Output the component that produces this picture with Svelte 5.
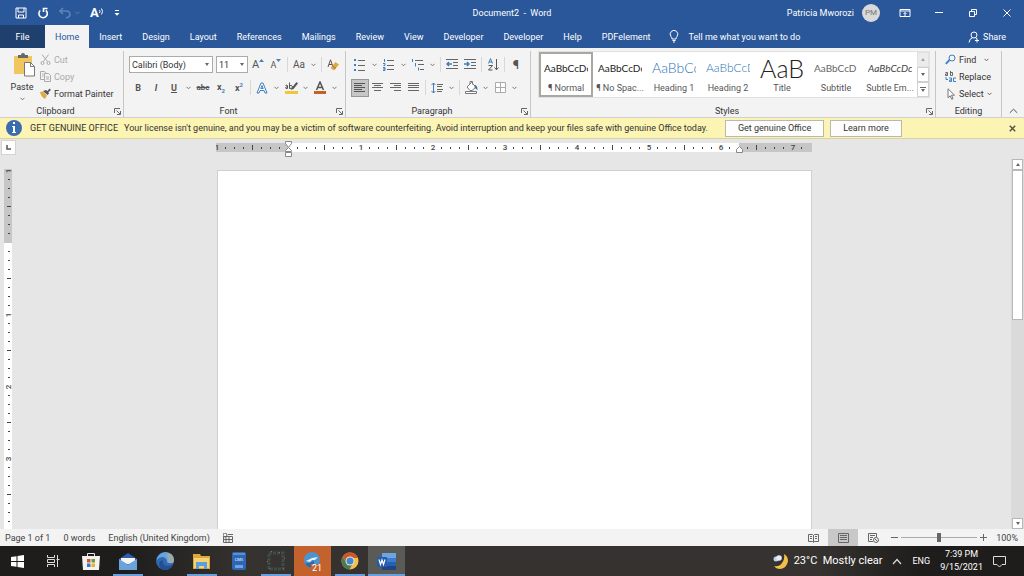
<script lang="ts">
	const tabs = [
		'File',
		'Home',
		'Insert',
		'Design',
		'Layout',
		'References',
		'Mailings',
		'Review',
		'View',
		'Developer',
		'Developer',
		'Help',
		'PDFelement'
	];

	const styles = [
		{ name: '¶ Normal', sample: 'AaBbCcDc', kind: 'normal' },
		{ name: '¶ No Spac...', sample: 'AaBbCcDc', kind: 'normal' },
		{ name: 'Heading 1', sample: 'AaBbCc', kind: 'heading1' },
		{ name: 'Heading 2', sample: 'AaBbCcD', kind: 'heading2' },
		{ name: 'Title', sample: 'AaB', kind: 'title' },
		{ name: 'Subtitle', sample: 'AaBbCcD', kind: 'subtitle' },
		{ name: 'Subtle Em...', sample: 'AaBbCcDc', kind: 'emphasis' }
	];

	// 72px per inch, one tick every 1/8 inch
	const tickStep = 9;
	const hTicks = Array.from({ length: 66 }, (_, i) => i - 8);

	let rulerHeight = $state(370);
	const vTicks = $derived(
		Array.from({ length: Math.max(0, Math.floor((rulerHeight - 84) / tickStep) + 9) }, (_, i) => i - 8)
	);

	let activeTab = $state(1);
	let activeStyle = $state(0);
	let zoom = $state(50);
	let showMessage = $state(true);
</script>

{#snippet chevron()}
	<svg class="chevron" width="5" height="4" viewBox="0 0 5 4"><path d="M.5 .8 2.5 2.8 4.5 .8" /></svg>
{/snippet}

{#snippet drop(label: string)}
	<button class="drop" aria-label={label}>{@render chevron()}</button>
{/snippet}

{#snippet launcher(label: string)}
	<button class="launcher" aria-label={label}>
		<svg width="7" height="7" viewBox="0 0 7 7"><path d="M.5 5V.5H6M2.5 2.5l3.5 3.5M6.5 3v3.500H3" /></svg>
	</button>
{/snippet}

<div class="window">
	<header class="titlebar">
		<div class="quick">
			<button aria-label="Save">
				<svg width="12" height="12" viewBox="0 0 12 12"><path d="M1 1h10v10H1zM3 1v4h6V1M3.500 11V8h5v3" /></svg>
			</button>
			<button aria-label="Repeat">
				<svg width="12" height="12" viewBox="0 0 12 12"><path class="thick" d="M3.200 3.500A4.200 4.200 0 1 0 8.800 3.300M6.500 5V1.500H10.500" /></svg>
			</button>
			<button class="faded" aria-label="Undo">
				<svg width="12" height="12" viewBox="0 0 12 12"><path class="thick" d="M1 4h6q4 0 4 3.500Q11 10 7 11M4 1 1 4l3 3" /></svg>
			</button>
			<span class="faded">{@render chevron()}</span>
			<button class="read" aria-label="Read aloud">
				<b>A</b>
				<svg width="5" height="10" viewBox="0 0 5 10"><path d="M.5 2q1 1.500 0 3M2.500 .5q2 3 0 6" /></svg>
			</button>
			<button aria-label="Customise toolbar">
				<svg width="6" height="8" viewBox="0 0 6 8"><path d="M1 1.500h4" /><path class="solid" d="M.5 4h5L3 6.800z" /></svg>
			</button>
		</div>
		<h1>Document2&nbsp; -&nbsp; Word</h1>
		<div class="account">
			<span>Patricia Mworozi</span>
			<span class="avatar">PM</span>
			<button aria-label="Ribbon display options">
				<svg width="12" height="10" viewBox="0 0 12 10"><path d="M1 1.500h10v7H1zM1 3h10M6 8V4.500M4.500 6 6 4.500 7.500 6" /></svg>
			</button>
			<button aria-label="Minimise">
				<svg width="10" height="10" viewBox="0 0 10 10"><path d="M1 4.500h8" /></svg>
			</button>
			<button aria-label="Restore">
				<svg width="10" height="10" viewBox="0 0 10 10"><path d="M1.500 3.500h5v5h-5zM3.500 3V1.500h5v5H7" /></svg>
			</button>
			<button aria-label="Close">
				<svg width="10" height="10" viewBox="0 0 10 10"><path d="M1.500 1.500l7 7M8.500 1.500l-7 7" /></svg>
			</button>
		</div>
	</header>

	<nav class="tabs">
		{#each tabs as tab, i}
			<button class="tab" class:file={i === 0} class:active={i === activeTab} onclick={() => (activeTab = i)}>{tab}</button>
		{/each}
		<button class="tell">
			<svg width="10" height="13" viewBox="0 0 10 13"><path d="M3 9Q3 7.500 2 6.500A3.800 3.800 0 1 1 8 6.500Q7 7.500 7 9zM3.500 10.500h3M4 12h2" /></svg>
			Tell me what you want to do
		</button>
		<button class="share">
			<svg width="12" height="12" viewBox="0 0 12 12"><circle cx="6" cy="4" r="3" /><path d="M1 11.500Q1.500 7.500 4.500 6.800M7.500 6.800l1.500 1.200M9 7.500v4M7 9.500h4" /></svg>
			Share
		</button>
	</nav>

	<section class="ribbon">
		<div class="group clipboard">
			<div class="body">
				<button class="paste">
					<svg width="22" height="24" viewBox="0 0 22 24">
						<path fill="#efc75e" d="M1 3h18v18H1z" />
						<path fill="#686868" d="M5 5V2h3q0-2 2-2t2 2h3v3z" />
						<path fill="#fff" stroke="#777" d="M11.500 9.500h6l4 4v9.500h-10z" />
						<path fill="none" stroke="#777" d="M17.500 9.500v4h4" />
					</svg>
					Paste
					{@render chevron()}
				</button>
				<div class="stack">
					<button class="disabled" disabled>
						<svg width="11" height="11" viewBox="0 0 11 11"><path d="M2 .5l5.500 7M8.500 .5 3.500 7.500" /><circle cx="2.500" cy="9" r="1.500" /><circle cx="8.500" cy="9" r="1.500" /></svg>
						Cut
					</button>
					<button class="disabled" disabled>
						<svg width="11" height="11" viewBox="0 0 11 11"><path d="M4 8.500H.5v-8h4l1.500 2M2 3h1.500M2 5h1.500M4.500 2.500h4l2 2v6h-6zM6 6h3M6 8h3" /></svg>
						Copy
					</button>
					<button>
						<svg width="11" height="11" viewBox="0 0 11 11"><path fill="#e8b84a" d="M0 4l3-.5 4 4L5 11Q1 9 0 4z" /><path fill="#555" d="M3 3l3-1 1.500 1L9.500 .5 11 2 8.500 4 9 5.500 7.500 7z" /></svg>
						Format Painter
					</button>
				</div>
			</div>
			<footer><span>Clipboard</span>{@render launcher('Clipboard settings')}</footer>
		</div>

		<div class="group font">
			<div class="body rows">
				<div class="row">
					<span class="select name">
						<select aria-label="Font"><option>Calibri (Body)</option></select>
						<i></i>
					</span>
					<span class="select size">
						<select aria-label="Font size"><option>11</option></select>
						<i></i>
					</span>
					<button class="tool grow">A<svg width="5" height="4" viewBox="0 0 5 4"><path fill="#4a80b8" d="M0 3h5L2.500 0z" /></svg></button>
					<button class="tool shrink">A<svg width="5" height="4" viewBox="0 0 5 4"><path fill="#4a80b8" d="M0 0h5L2.500 3z" /></svg></button>
					<span class="rule"></span>
					<button class="tool case">Aa</button>
					{@render drop('Change case')}
					<span class="rule"></span>
					<button class="tool" aria-label="Clear formatting">
						<svg width="12" height="12" viewBox="0 0 12 12"><path stroke="#555" fill="none" d="M1 8 3.500 .8 6 8M2 5.500h3" /><path fill="#e3a83b" d="M3.500 9 8.500 3l3.500 2.500-5 6z" /><path stroke="#777" fill="none" d="M5.500 7l3.500 2.500" /></svg>
					</button>
				</div>
				<div class="row">
					<button class="tool"><b>B</b></button>
					<button class="tool"><b><em>I</em></b></button>
					<button class="tool"><b><u>U</u></b></button>
					{@render drop('Underline style')}
					<button class="tool strike">abc</button>
					<button class="tool"><b>x<sub>2</sub></b></button>
					<button class="tool"><b>x<sup>2</sup></b></button>
					<span class="rule"></span>
					<button class="tool" aria-label="Text effects">
						<svg width="12" height="12" viewBox="0 0 12 12"><path fill="#fff" stroke="#3f7fbf" d="M1 11 5 1h2l4 10H9L8 8.500H4L3 11zM4.800 6.500h2.400L6 3.500z" /></svg>
					</button>
					{@render drop('Text effects menu')}
					<button class="tool" aria-label="Highlight">
						<svg width="13" height="13" viewBox="0 0 13 13"><path fill="#f0c63c" d="M0 10h13v3H0z" /><path stroke="#555" fill="none" d="M.5 4.500q2-1 2 0v3q-2 .5-2-.7 0-1 2-1M4.500 1.500v6q3 .5 3-1.500T4.500 4.500" /><path fill="#555" d="M6 9l1-2.500L11.500 1 13 2.500 8.500 8z" /></svg>
					</button>
					{@render drop('Highlight colour')}
					<button class="tool" aria-label="Font colour">
						<svg width="12" height="13" viewBox="0 0 12 13"><path fill="#c4602b" d="M0 10h12v3H0z" /><path stroke="#555" stroke-width="1.500" fill="none" d="M2.500 9 6 1l3.500 8M3.800 6.500h4.400" /></svg>
					</button>
					{@render drop('Font colour menu')}
				</div>
			</div>
			<footer><span>Font</span>{@render launcher('Font settings')}</footer>
		</div>

		<div class="group paragraph">
			<div class="body rows">
				<div class="row">
					<button class="tool" aria-label="Bullets">
						<svg width="12" height="12" viewBox="0 0 12 12"><path fill="#3f7fbf" d="M0 0h2v2H0zM0 5h2v2H0zM0 10h2v2H0z" /><path stroke="#666" d="M4 1.500h7M4 6.500h7M4 11.500h7" /></svg>
					</button>
					{@render drop('Bullet library')}
					<button class="tool" aria-label="Numbering">
						<svg width="12" height="12" viewBox="0 0 12 12"><path stroke="#3f7fbf" fill="none" d="M1.500 0v3M0 4.500h2v2H.5M0 8.500h2v3H0M0 10h2" /><path stroke="#666" d="M4 1.500h7M4 6.500h7M4 10.500h7" /></svg>
					</button>
					{@render drop('Numbering library')}
					<button class="tool" aria-label="Multilevel list">
						<svg width="12" height="12" viewBox="0 0 12 12"><path stroke="#3f7fbf" fill="none" d="M.5 0v3M3.500 4v3.500M6.500 8.500v3" /><path stroke="#666" d="M3 1.500h8M6 5.500h6M8 10.500h4" /></svg>
					</button>
					{@render drop('List library')}
					<span class="rule"></span>
					<button class="tool" aria-label="Decrease indent">
						<svg width="12" height="11" viewBox="0 0 12 11"><path stroke="#666" d="M0 .5h12M7 3.500h5M7 6.500h5M0 9.500h12" /><path fill="none" stroke="#3f7fbf" stroke-width="1.500" d="M6 5H1M3 3 1 5l2 2" /></svg>
					</button>
					<button class="tool" aria-label="Increase indent">
						<svg width="12" height="11" viewBox="0 0 12 11"><path stroke="#666" d="M0 .5h12M7 3.500h5M7 6.500h5M0 9.500h12" /><path fill="none" stroke="#3f7fbf" stroke-width="1.500" d="M0 5h5M3 3l2 2-2 2" /></svg>
					</button>
					<span class="rule"></span>
					<button class="tool" aria-label="Sort">
						<svg width="11" height="13" viewBox="0 0 11 13"><path fill="none" stroke="#3f7fbf" d="M.5 5.500 2.500 .5l2 5M1 4h3" /><path fill="none" stroke="#555" d="M.5 7.500h4l-4 4.500h4M8.500 1v10.500M6.500 9.500l2 2.300 2-2.300" /></svg>
					</button>
					<span class="rule"></span>
					<button class="tool pilcrow">¶</button>
				</div>
				<div class="row">
					<button class="tool pressed" aria-label="Align left">
						<svg width="12" height="11" viewBox="0 0 12 11"><path stroke="#555" d="M0 1.500h11M0 3.500h8M0 5.500h11M0 7.500h8M0 9.500h11" /></svg>
					</button>
					<button class="tool" aria-label="Centre">
						<svg width="12" height="11" viewBox="0 0 12 11"><path stroke="#666" d="M0 1.500h11M2 3.500h7M0 5.500h11M2 8.500h7" /></svg>
					</button>
					<button class="tool" aria-label="Align right">
						<svg width="12" height="11" viewBox="0 0 12 11"><path stroke="#666" d="M0 1.500h11M4 3.500h7M0 5.500h11M4 8.500h7" /></svg>
					</button>
					<button class="tool" aria-label="Justify">
						<svg width="12" height="11" viewBox="0 0 12 11"><path stroke="#666" d="M0 1.500h11M0 3.500h11M0 5.500h11M0 8.500h11" /></svg>
					</button>
					<span class="rule"></span>
					<button class="tool" aria-label="Line spacing">
						<svg width="12" height="12" viewBox="0 0 12 12"><path fill="none" stroke="#3f7fbf" d="M2.500 1v10M.5 3l2-2 2 2M.5 9l2 2 2-2" /><path stroke="#666" d="M6 2.500h6M6 4.500h5M6 7.500h6M6 9.500h5" /></svg>
					</button>
					{@render drop('Line spacing options')}
					<span class="rule"></span>
					<button class="tool" aria-label="Shading">
						<svg width="13" height="13" viewBox="0 0 13 13"><path fill="#fff" stroke="#777" d="M2 6l4.500-4.500L11 6l-4 3.500H5zM5 3V.5h2.500v3M.5 10.500h11v2H.5z" /><path fill="#3f6fa5" d="M9.500 4q3 0 3 5-2-1-3-3z" /></svg>
					</button>
					{@render drop('Shading colour')}
					<button class="tool" aria-label="Borders">
						<svg width="11" height="11" viewBox="0 0 11 11"><path fill="#fff" stroke="#aaa" d="M.5 .5h10v10H.5zM5.500 0v11M0 5.500h11" /></svg>
					</button>
					{@render drop('Border options')}
				</div>
			</div>
			<footer><span>Paragraph</span>{@render launcher('Paragraph settings')}</footer>
		</div>

		<div class="group styles">
			<div class="body">
				<div class="gallery">
					{#each styles as style, i}
						<button class="style" class:selected={i === activeStyle} onclick={() => (activeStyle = i)}>
							<span class="sample {style.kind}">{style.sample}</span>
							<span class="caption">{style.name}</span>
						</button>
					{/each}
					<div class="scroller">
						<button aria-label="Previous styles" disabled><i class="tri up"></i></button>
						<button aria-label="Next styles"><i class="tri"></i></button>
						<button aria-label="More styles"><i class="bar"></i><i class="tri"></i></button>
					</div>
				</div>
			</div>
			<footer><span>Styles</span>{@render launcher('Styles pane')}</footer>
		</div>

		<div class="group editing">
			<div class="body">
				<div class="stack">
					<button>
						<svg width="11" height="11" viewBox="0 0 11 11"><circle cx="7" cy="4" r="3" stroke="#3f7fbf" /><path stroke="#3f7fbf" stroke-width="1.800" d="M4.500 6 .8 9.800" /></svg>
						Find
						<span class="after">{@render chevron()}</span>
					</button>
					<button>
						<svg width="11" height="11" viewBox="0 0 11 11"><path stroke="#555" d="M.5 1.500h2v3h-2v-1.500h2M5.500 0v4.500h2v-3h-2" /><path stroke="#3f7fbf" d="M1 6v2.500h2M4 7h2.500v3.500H4.500V9h2M11 7H8.500v3.500H11" /></svg>
						Replace
					</button>
					<button>
						<svg width="11" height="12" viewBox="0 0 11 12"><path fill="#fff" stroke="#777" d="M3 .8v9l2.200-2 1.500 3.500 1.300-.6L6.500 7.200H9.500z" /></svg>
						Select
						{@render chevron()}
					</button>
				</div>
			</div>
			<footer><span>Editing</span></footer>
		</div>
		<button class="collapse" aria-label="Collapse the ribbon">
			<svg width="9" height="6" viewBox="0 0 9 6"><path d="M.8 4.800 4.500 1.200 8.200 4.800" /></svg>
		</button>
	</section>

	{#if showMessage}
		<aside class="message">
			<svg width="18" height="18" viewBox="0 0 18 18"><circle cx="9" cy="9" r="8" fill="#3c6cb0" /><path fill="#fff" d="M8 3h2v2H8zM7 7h3v6h1v1H7v-1h1V8H7z" /></svg>
			<strong>GET GENUINE OFFICE</strong>
			<p>Your license isn't genuine, and you may be a victim of software counterfeiting. Avoid interruption and keep your files safe with genuine Office today.</p>
			<button class="action">Get genuine Office</button>
			<button class="action">Learn more</button>
			<button class="dismiss" aria-label="Dismiss" onclick={() => (showMessage = false)}>
				<svg width="7" height="7" viewBox="0 0 7 7"><path d="M.8 .8l5.400 5.400M6.200 .8.8 6.200" /></svg>
			</button>
		</aside>
	{/if}

	<main class="workspace">
		<button class="tabstop" aria-label="Tab stop">
			<svg width="5" height="5" viewBox="0 0 5 5"><path d="M1 0v4h4" /></svg>
		</button>
		<div class="hruler">
			<svg width="596" height="20" viewBox="0 0 596 20">
				<path fill="#c6c6c6" d="M0 4h596v9H0z" />
				<path fill="#fff" d="M73 4h450v9H73z" />
				{#each hTicks as n}
					{#if n % 8 === 0}
						{#if n !== 0}
							<text x={73 + n * tickStep} y="11">{Math.abs(n / 8)}</text>
						{/if}
					{:else if n % 4 === 0}
						<rect x={72 + n * tickStep} y="6" width="1" height="5" />
					{:else}
						<rect x={72 + n * tickStep} y="8" width="1" height="2" />
					{/if}
				{/each}
				<path class="marker" d="M69.500 2.500h6v2l-3 4-3-4zM72.500 8.500l3 3v1h-6v-1zM69.500 13.500h6v4h-6z" />
				<path class="marker" d="M523.500 7.500l3 3v3h-6v-3z" />
			</svg>
		</div>
		<div class="vruler" bind:clientHeight={rulerHeight}>
			<svg width="8" height={rulerHeight - 10}>
				<rect class="paper" width="8" height="100%" />
				<path fill="#c6c6c6" d="M0 0h8v74H0z" />
				{#each vTicks as n}
					{#if n % 8 === 0}
						{#if n !== 0}
							<text transform="translate(7 {74 + n * tickStep}) rotate(-90)">{Math.abs(n / 8)}</text>
						{/if}
					{:else if n % 4 === 0}
						<rect x="3" y={73 + n * tickStep} width="4" height="1" />
					{:else}
						<rect x="4" y={73 + n * tickStep} width="2" height="1" />
					{/if}
				{/each}
			</svg>
		</div>
		<div class="canvas">
			<div class="page" contenteditable="true" role="textbox" aria-label="Document" tabindex="0"></div>
		</div>
		<div class="scrollbar">
			<button aria-label="Scroll up"><i class="tri up"></i></button>
			<div class="track"><span class="thumb"></span></div>
			<button aria-label="Scroll down"><i class="tri"></i></button>
		</div>
	</main>

	<div class="status">
		<span>Page 1 of 1</span>
		<span>0 words</span>
		<span>English (United Kingdom)</span>
		<svg width="10" height="10" viewBox="0 0 10 10"><path fill="none" stroke="#666" d="M.5 3.500h9v6h-9zM3 3.500v6M6 3.500v6M1 6.500h8M5 1.500h5" /><circle cx="2" cy="2" r="2" fill="#555" /></svg>
		<div class="views">
			<button aria-label="Read mode">
				<svg width="11" height="10" viewBox="0 0 11 10"><path d="M.5 1.500h4l1 1 1-1h4v7h-4l-1 1-1-1h-4zM5.500 2v7M2 3.500h2M2 5.500h2M7 3.500h2M7 5.500h2" /></svg>
			</button>
			<button class="current" aria-label="Print layout">
				<svg width="11" height="10" viewBox="0 0 11 10"><path d="M.5 .5h10v9H.5zM2 2.500h7M2 4.500h7M2 6.500h7" /></svg>
			</button>
			<button aria-label="Web layout">
				<svg width="11" height="10" viewBox="0 0 11 10"><path d="M5 8.500H.5v-8h8V4M2 2.500h5M2 4.500h3M2 6.500h2" /><circle cx="8" cy="7" r="2.500" /><path d="M6.500 5.500l3 3" /></svg>
			</button>
		</div>
		<div class="zoom">
			<button aria-label="Zoom out"><svg width="7" height="7" viewBox="0 0 7 7"><path d="M0 3.500h7" /></svg></button>
			<input type="range" aria-label="Zoom" min="0" max="100" bind:value={zoom} />
			<button aria-label="Zoom in"><svg width="7" height="7" viewBox="0 0 7 7"><path d="M0 3.500h7M3.500 0v7" /></svg></button>
			<span>100%</span>
		</div>
	</div>

	<div class="taskbar">
		<button class="app start" aria-label="Start">
			<svg width="13" height="13" viewBox="0 0 13 13"><path fill="#fff" d="M0 2l5.500-.8V6H0zM6.500 1 13 0v6H6.500zM0 7h5.500v4.800L0 11zM6.500 7H13v6l-6.500-1z" /></svg>
		</button>
		<button class="app" aria-label="Task view">
			<svg width="13" height="12" viewBox="0 0 13 12"><path fill="none" stroke="#ddd" d="M.5 0v2.500h7V0M.5 4.500h7v3h-7zM.5 12V9.500h7V12M10.500 0v12M9.500 4.500h3" /></svg>
		</button>
		<button class="app" aria-label="Store">
			<svg width="18" height="18" viewBox="0 0 18 18"><path fill="none" stroke="#e8e8e8" d="M5.500 4V1.500h7V4" /><path fill="#f2f2f2" d="M0 4h18l-1 14H1z" /><path fill="#d9532c" d="M5 7h3.500v3.500H5z" /><path fill="#6d9c3c" d="M9.500 7H13v3.500H9.500z" /><path fill="#3079c4" d="M5 11.500h3.500V15H5z" /><path fill="#e9b233" d="M9.500 11.500H13V15H9.500z" /></svg>
		</button>
		<button class="app open" aria-label="Mail">
			<svg width="18" height="17" viewBox="0 0 18 17"><path fill="#2c5fa6" d="M0 6 9 0l9 6v3H0z" /><path fill="#f5f5f5" d="M2 5h14v6H2z" /><path fill="#6aa2dc" d="M0 6l9 5.500L18 6v11H0z" /></svg>
		</button>
		<button class="app" aria-label="Edge">
			<svg width="18" height="18" viewBox="0 0 18 18"><circle cx="9" cy="9" r="9" fill="#2f69b2" /><path fill="#69a5dc" d="M1 6Q4 0 10 0q8 1 8 8 0 3-4 3-4 0-3-2Q10 5 6 5 3 5 1 8z" /><path fill="#a1a8a8" d="M12 1q6 2 6 8-1 3-4 2-2 0-2-1 1-4-1-6z" /><path fill="#234f94" d="M7 8q-1 6 5 6 3 0 5-2-3 6-8 6-6-1-6-6 0-3 4-4z" /></svg>
		</button>
		<button class="app open" aria-label="File Explorer">
			<svg width="17" height="15" viewBox="0 0 17 15"><path fill="#dca936" d="M0 0h7l1 2h9v13H0z" /><path fill="#f6d277" d="M1 4h15v10H1z" /><path fill="#5c9fda" d="M3 8h11v7h-3v-3H6v3H3z" /></svg>
		</button>
		<button class="app" aria-label="CMS">
			<svg width="14" height="18" viewBox="0 0 14 18"><rect width="14" height="18" rx="2" fill="#2c66b5" /><rect x="1" y="1" width="12" height="2" fill="#5b91d0" /><rect x="3" y="13" width="8" height="3" fill="#6fa5dc" /><text x="7" y="9">CMS</text></svg>
		</button>
		<button class="app open" aria-label="Capture tool">
			<svg width="18" height="20" viewBox="0 0 18 20"><path fill="none" stroke="#3c4c4b" stroke-width="3" stroke-dasharray="3 1" d="M2 2h14v16H2z" /><path fill="#b36437" d="M4 0h1v1H4zM12 1h1v1h-1zM17 7h1v1h-1zM16 17h1v1h-1zM2 17h1v1H2zM0 10h1v1H0z" /></svg>
		</button>
		<button class="app alert" aria-label="Telegram">
			<svg width="18" height="18" viewBox="0 0 18 18"><circle cx="8" cy="8" r="8" fill="#4d94cf" /><path fill="#e8f0f5" d="M2 9l6-3 6-1-3 3-3 0-2 2z" /><path fill="#2f69a8" d="M1 11q4 1 6-1l3-1v6q-6 2-9-4z" /></svg>
			<span class="badge">21</span>
		</button>
		<button class="app open" aria-label="Chrome">
			<svg width="18" height="18" viewBox="0 0 18 18"><circle cx="9" cy="9" r="8.500" fill="#f0c34a" /><path fill="#c9582c" d="M1.500 5A8.500 8.500 0 0 1 17 6H9L6 11z" /><path fill="#4d7a55" d="M1.500 5A8.500 8.500 0 0 0 8.500 17.500L12 11H6z" /><circle cx="9" cy="9" r="4.500" fill="#e8e8e0" /><circle cx="9" cy="9" r="3.500" fill="#4787ca" /></svg>
		</button>
		<button class="app open focused" aria-label="Word">
			<svg width="19" height="17" viewBox="0 0 19 17"><path fill="#6ca6e2" d="M5 0h14v5H5z" /><path fill="#3b7dcc" d="M5 5h14v4H5z" /><path fill="#2860ae" d="M5 9h14v4H5z" /><path fill="#1d4487" d="M5 13h14v4H5z" /><path fill="#245caf" d="M0 4h10v10H0z" /><path fill="none" stroke="#fff" stroke-width="1.200" d="M2 6.500l1.500 5L5 7l1.500 4.500L8 6.500" /></svg>
		</button>
		<div class="tray">
			<svg width="15" height="15" viewBox="0 0 15 15"><path fill="#f0c04a" d="M11 0q4 2 4 7-1 7-8 8-4 0-6-3 5 1 8-3 3-4 2-9z" /><circle cx="3" cy="5" r="2.500" fill="#b9d3ee" /><circle cx="6" cy="4" r="2.800" fill="#e4edf6" /></svg>
			<span class="weather">23°C&nbsp; Mostly clear</span>
			<svg width="10" height="7" viewBox="0 0 10 7"><path fill="none" stroke="#ddd" stroke-width="1.200" d="M1 6l4-4.500L9 6" /></svg>
			<span>ENG</span>
			<time><span>7:39 PM</span><span>9/15/2021</span></time>
			<svg width="13" height="13" viewBox="0 0 13 13"><path fill="none" stroke="#ddd" d="M.5 1.500h12v8H9l-2.500 2.500L4 9.500H.5z" /></svg>
		</div>
	</div>
</div>

<style>
	:global(body) {
		margin: 0;
	}

	.window {
		display: flex;
		flex-direction: column;
		height: 100vh;
		overflow: hidden;
		font-family: Roboto, 'Open Sans', sans-serif;
		font-size: 9px;
		line-height: 12px;
		color: #333;
		background: #e6e6e6;
	}

	button {
		display: flex;
		align-items: center;
		justify-content: center;
		padding: 0;
		border: 0;
		background: none;
		font: inherit;
		color: inherit;
		white-space: nowrap;
	}

	svg {
		flex: none;
	}

	.chevron path {
		fill: none;
		stroke: #777;
	}

	/* title bar */
	.titlebar {
		display: grid;
		grid-template-columns: 1fr auto 1fr;
		align-items: center;
		height: 25px;
		color: #fff;
		background: #2a579a;
	}

	.titlebar path,
	.tabs path,
	.tabs circle {
		fill: none;
		stroke: #fff;
	}

	.titlebar .thick {
		stroke-width: 1.600;
	}

	.titlebar .solid {
		fill: #fff;
		stroke: none;
	}

	.quick {
		display: flex;
		align-items: center;
		gap: 10px;
		padding-left: 15px;
	}

	.faded {
		display: flex;
		opacity: 0.25;
	}

	.quick span.faded {
		margin-left: -6px;
	}

	.read b {
		font-size: 13px;
	}

	h1 {
		margin: 0;
		font-size: 9px;
		font-weight: 400;
	}

	.account {
		display: flex;
		align-items: center;
		justify-content: flex-end;
	}

	.account button {
		width: 34px;
		height: 24px;
	}

	.avatar {
		width: 18px;
		height: 18px;
		margin: 0 8px;
		border-radius: 50%;
		background: #d9d9d9;
		color: #777;
		font-size: 8px;
		line-height: 18px;
		text-align: center;
	}

	/* tabs */
	.tabs {
		display: flex;
		height: 23px;
		color: #fff;
		background: #2a579a;
	}

	.tab {
		padding: 0 10px;
	}

	.tab.file {
		width: 45px;
		background: #1f3f6e;
	}

	.tab.active {
		background: #f3f3f3;
		color: #2a579a;
	}

	.tell {
		gap: 10px;
		margin-left: 8px;
	}

	.share {
		gap: 3px;
		margin: 0 18px 0 auto;
	}

	/* ribbon */
	.ribbon {
		display: flex;
		height: 69px;
		border-bottom: 1px solid #d2d0ce;
		background: #f3f3f3;
	}

	.group {
		display: flex;
		flex-direction: column;
		box-sizing: border-box;
		margin-top: 3px;
		border-right: 1px solid #c8c6c4;
	}

	.body {
		display: flex;
		flex: none;
		height: 54px;
	}

	.group footer {
		display: flex;
		align-items: center;
		height: 12px;
	}

	.group footer span {
		flex: 1;
		text-align: center;
	}

	.launcher {
		width: 12px;
	}

	.launcher path,
	.stack path,
	.stack circle {
		fill: none;
		stroke: #666;
	}

	.clipboard {
		width: 124px;
	}

	.font {
		width: 222px;
	}

	.paragraph {
		width: 185px;
	}

	.styles {
		flex: 1;
	}

	.editing {
		width: 66px;
	}

	.paste {
		flex-direction: column;
		justify-content: flex-start;
		gap: 4px;
		width: 36px;
		margin-left: 4px;
		padding-top: 2px;
	}

	.paste svg:first-child {
		margin-left: 4px;
	}

	.stack {
		display: flex;
		flex-direction: column;
	}

	.stack button {
		justify-content: flex-start;
		gap: 3px;
		height: 17px;
	}

	.stack path[fill] {
		fill: #e0aa3e;
		stroke: none;
	}

	.stack path[fill='#555'] {
		fill: #555;
	}

	.stack path[stroke='#3f7fbf'],
	.stack circle[stroke] {
		stroke: #3f7fbf;
	}

	.stack path[stroke='#777'] {
		fill: #fff;
		stroke: #777;
	}

	.stack .disabled {
		color: #aaa;
	}

	.stack .disabled path,
	.stack .disabled circle {
		stroke: #aaa;
	}

	.rows {
		flex-direction: column;
		gap: 6px;
		padding: 5px 0 0 5px;
		box-sizing: border-box;
	}

	.row {
		display: flex;
		align-items: center;
		height: 17px;
	}

	.tool {
		width: 18px;
		height: 18px;
		color: #555;
	}

	.tool.pressed {
		background: #c6c6c6;
		box-shadow: inset 0 0 0 1px #979797;
	}

	.tool sub,
	.tool sup {
		font-size: 6px;
		line-height: 6px;
		color: #3f7fbf;
	}

	.grow,
	.shrink {
		align-items: flex-start;
		font-size: 11px;
		line-height: 18px;
	}

	.shrink {
		font-size: 9px;
	}

	.grow svg,
	.shrink svg {
		margin-top: 3px;
	}

	.case {
		font-size: 10px;
	}

	.strike {
		font-size: 8px;
		font-weight: 700;
		text-decoration: line-through;
	}

	.pilcrow {
		font-size: 13px;
	}

	.drop {
		width: 11px;
		height: 18px;
	}

	.rule {
		width: 1px;
		height: 15px;
		margin: 0 2px;
		background: #d8d8d8;
	}

	.select {
		display: grid;
		align-items: center;
		margin-right: 3px;
	}

	.select select,
	.select i {
		grid-area: 1 / 1;
	}

	.select select {
		width: 100%;
		height: 17px;
		padding: 0 2px;
		border: 1px solid #ababab;
		border-radius: 0;
		appearance: none;
		background: #fff;
		color: #333;
		font: inherit;
	}

	.select i,
	.tri {
		width: 0;
		height: 0;
		border: 2px solid transparent;
		border-top: 3px solid #666;
		border-bottom: 0;
	}

	.select i {
		justify-self: end;
		margin-right: 4px;
		pointer-events: none;
	}

	.tri.up {
		border-top: 0;
		border-bottom: 3px solid #666;
	}

	.select.name {
		width: 84px;
	}

	.select.size {
		width: 32px;
		margin-right: 1px;
	}

	.gallery {
		display: flex;
		flex: 1;
		height: 45px;
		margin: 1px 6px 0 8px;
		background: #fff;
		box-shadow: 0 0 0 1px #e1e1e1;
	}

	.style {
		flex: 1;
		flex-direction: column;
		width: 54px;
		min-width: 0;
		justify-content: flex-end;
		padding: 0 5px 3px;
		overflow: hidden;
	}

	.style.selected {
		box-shadow: inset 0 0 0 2px #a8a8a0;
	}

	.sample {
		display: flex;
		align-items: center;
		align-self: stretch;
		height: 28px;
		overflow: hidden;
		color: #222;
		font-family: Lato, 'Open Sans', sans-serif;
		font-size: 10px;
	}

	.sample.heading1 {
		color: #2e74b5;
		font-size: 14px;
		font-weight: 300;
	}

	.sample.heading2 {
		color: #2e74b5;
		font-size: 12px;
		font-weight: 300;
	}

	.sample.title {
		font-size: 25px;
		font-weight: 300;
	}

	.sample.subtitle {
		color: #666;
	}

	.sample.emphasis {
		color: #444;
		font-style: italic;
	}

	.caption {
		color: #555;
	}

	.scroller {
		display: flex;
		flex-direction: column;
		width: 12px;
	}

	.scroller button {
		flex: 1;
		flex-direction: column;
		gap: 1px;
		border: 1px solid #d0d0d0;
	}

	.scroller button:disabled {
		background: #e1e1e1;
		opacity: 0.6;
	}

	.bar {
		width: 6px;
		height: 1px;
		background: #666;
	}

	.editing .stack {
		padding-left: 9px;
	}

	.after {
		display: flex;
		margin-left: 5px;
	}

	.collapse {
		align-self: flex-end;
		width: 22px;
		height: 12px;
	}

	.collapse path,
	.dismiss path,
	.tabstop path {
		fill: none;
		stroke: #555;
	}

	/* message bar */
	.message {
		display: flex;
		align-items: center;
		height: 21px;
		padding: 0 6px 0 5px;
		border-bottom: 1px solid #d8d3a0;
		box-sizing: border-box;
		background: #fcf4b3;
	}

	.message strong {
		margin: 0 6px 0 7px;
		font-weight: 400;
	}

	.message p {
		margin: 0 17px 0 0;
		white-space: nowrap;
	}

	.action {
		height: 17px;
		margin-right: 6px;
		padding: 0 12px;
		border: 1px solid #b9b9b0;
		background: #fdfdfd;
	}

	.dismiss {
		width: 11px;
		height: 17px;
		margin-left: auto;
	}

	.dismiss path,
	.tabstop path {
		stroke-width: 1.500;
	}

	/* document area */
	.workspace {
		display: grid;
		grid-template-rows: 20px minmax(0, 1fr);
		grid-template-columns: 17px 1fr 13px;
		flex: 1;
		min-height: 0;
	}

	.tabstop {
		width: 13px;
		height: 13px;
		margin: 2px 0 0 2px;
		background: #fff;
		box-shadow: 0 0 0 1px #d4d4d4;
	}

	.hruler {
		grid-column: 2 / 4;
		padding-right: 13px;
	}

	.hruler svg,
	.vruler svg {
		display: block;
		margin: 0 auto;
		fill: #444;
		font-size: 8px;
		font-weight: 500;
		text-anchor: middle;
	}

	.vruler svg {
		margin: 0;
	}

	.paper {
		fill: #fff;
	}

	.marker {
		fill: #fff;
		stroke: #888;
	}

	.vruler {
		padding: 10px 0 0 4px;
		overflow: hidden;
	}

	.canvas {
		display: flex;
		justify-content: center;
		padding-top: 11px;
		overflow: hidden;
	}

	.page {
		width: 593px;
		border: 1px solid #d0d0d0;
		border-bottom: 0;
		background: #fff;
	}

	.scrollbar {
		display: flex;
		flex-direction: column;
		padding: 0 1px;
		background: #dadada;
	}

	.scrollbar button {
		height: 11px;
		border: 1px solid #b8b8b8;
		background: #fff;
	}

	.track {
		flex: 1;
	}

	.thumb {
		display: block;
		box-sizing: border-box;
		height: 43%;
		border: 1px solid #b8b8b8;
		background: #fff;
	}

	/* status bar */
	.status {
		display: flex;
		align-items: center;
		gap: 13px;
		height: 17px;
		padding: 0 6px 0 5px;
		background: #f3f3f3;
		color: #444;
	}

	.status path,
	.status circle {
		fill: none;
		stroke: #666;
	}

	.views {
		display: flex;
		margin-left: auto;
	}

	.views button {
		width: 30px;
		height: 17px;
	}

	.views .current {
		background: #c8c8c8;
	}

	.zoom {
		display: flex;
		align-items: center;
		gap: 3px;
		margin-left: -10px;
	}

	.zoom span {
		margin-left: 6px;
	}

	.zoom input {
		width: 76px;
		height: 12px;
		margin: 0;
		appearance: none;
		background: linear-gradient(#aaa, #aaa) center / 100% 1px no-repeat;
	}

	.zoom input::-webkit-slider-thumb {
		width: 4px;
		height: 9px;
		appearance: none;
		background: #666;
	}

	/* taskbar */
	.taskbar {
		display: flex;
		height: 30px;
		color: #fff;
		background: linear-gradient(90deg, #1e1d1b 0, #1e1d1b 12%, #35322f 24%, #35322f 80%, #1e1d1b 90%);
	}

	.app {
		width: 37px;
		box-sizing: border-box;
		border: solid transparent;
		border-width: 2px 0;
	}

	.app.start {
		width: 35px;
	}

	.app.open {
		background: linear-gradient(#6a9fdd, #6a9fdd) center bottom / 30px 2px no-repeat border-box;
	}

	.app.focused {
		border-bottom-color: #6a9fdd;
		background: #5a5b57;
	}

	.app.alert {
		position: relative;
		background: #c4622d;
	}

	.app text {
		fill: #fff;
		font-size: 4px;
		text-anchor: middle;
	}

	.badge {
		position: absolute;
		right: 8px;
		bottom: 1px;
		padding: 0 1px;
		line-height: 9px;
		background: #c4622d;
	}

	.tray {
		display: flex;
		align-items: center;
		gap: 10px;
		margin-left: auto;
		padding-right: 18px;
	}

	.tray .weather {
		margin-left: -4px;
		font-size: 11px;
	}

	time {
		display: flex;
		flex-direction: column;
		text-align: center;
		line-height: 13px;
	}
</style>
